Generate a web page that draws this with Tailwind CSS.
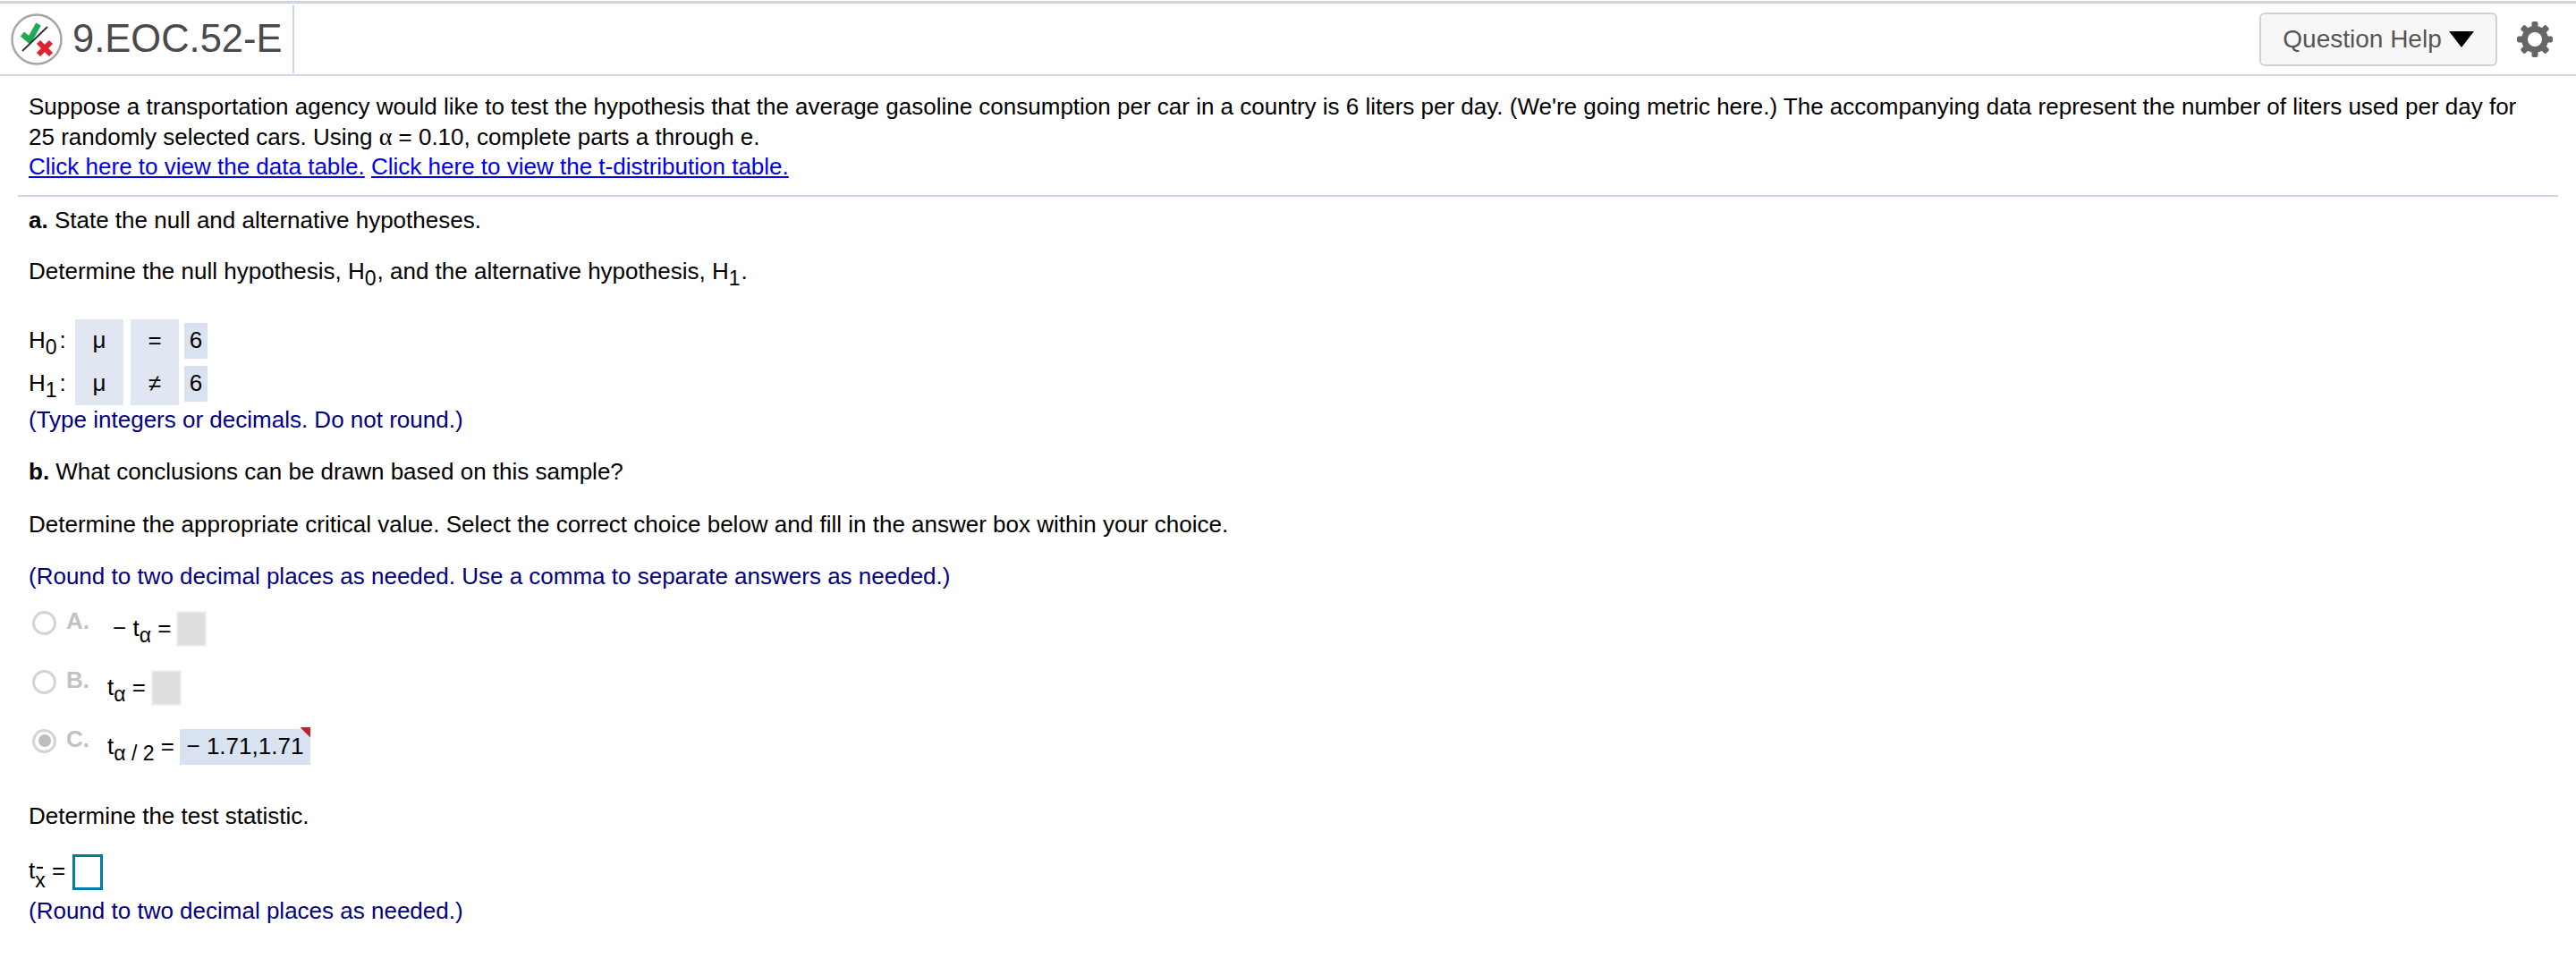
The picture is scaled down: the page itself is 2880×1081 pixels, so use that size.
<!DOCTYPE html>
<html lang="en">
<head>
    <meta charset="UTF-8" />
    <title>9.EOC.52-E</title>
    <script src="https://cdn.jsdelivr.net/npm/@tailwindcss/browser@4"></script>
</head>

<body class="bg-white text-black font-['Liberation_Sans',Arial,sans-serif] text-[26px] leading-[33.5px] overflow-hidden pt-[1px]">

<!-- Header -->
<header class="h-[84px] border-t-[3px] border-b-[2px] border-[#d0d5e5] flex items-center pl-[11px] pr-[25px]">
    <svg class="w-[60px] h-[60px] shrink-0" viewBox="0 0 60 60">
        <circle cx="30" cy="30" r="27.5" fill="#fff" stroke="#a6a6a6" stroke-width="2.500" />
        <path d="M14 24L22 31L32 13" fill="none" stroke="#1fa855" stroke-width="6.500" />
        <path d="M14 43L42 16" stroke="#333" stroke-width="2" />
        <path d="M32 33L46 47M46 33L32 47" stroke="#e0232e" stroke-width="6" />
    </svg>
    <h1 class="ml-[10px] text-[43.5px] leading-none text-[#4a4a4a] font-normal">9.EOC.52-E</h1>
    <div class="ml-[11px] w-[2px] h-[76px] bg-[#d0d5e5]"></div>
    <button class="ml-auto w-[266px] h-[60px] rounded-[6px] border-2 border-[#d2d2d2] bg-[#f7f7f7] text-[#555] text-[28px] flex items-center justify-center gap-[8px]">
        Question Help
        <svg class="w-[28px] h-[18px]" viewBox="0 0 28 18"><path d="M0 0H28L14 18Z" fill="#000" /></svg>
    </button>
    <svg class="ml-[21px] w-[42px] h-[42px]" viewBox="0 0 42 42" fill="#666">
        <circle cx="21" cy="21" r="15" />
        <g>
            <rect x="17.500" y="1" width="7" height="10" rx="2" />
            <rect x="17.500" y="1" width="7" height="10" rx="2" transform="rotate(45 21 21)" />
            <rect x="17.500" y="1" width="7" height="10" rx="2" transform="rotate(90 21 21)" />
            <rect x="17.500" y="1" width="7" height="10" rx="2" transform="rotate(135 21 21)" />
            <rect x="17.500" y="1" width="7" height="10" rx="2" transform="rotate(180 21 21)" />
            <rect x="17.500" y="1" width="7" height="10" rx="2" transform="rotate(225 21 21)" />
            <rect x="17.500" y="1" width="7" height="10" rx="2" transform="rotate(270 21 21)" />
            <rect x="17.500" y="1" width="7" height="10" rx="2" transform="rotate(315 21 21)" />
        </g>
        <circle cx="21" cy="21" r="8" fill="#fff" />
    </svg>
</header>

<main class="pl-[32px] pr-[20px]">

    <!-- Intro -->
    <section class="pt-[18px] pb-[14px] -ml-[12px] pl-[12px] border-b-2 border-[#d0d0e8]">
        <p>Suppose a transportation agency would like to test the hypothesis that the average gasoline consumption per car in a country is 6 liters per day. (We're going metric here.) The accompanying data represent the number of liters used per day for<br>
        25 randomly selected cars. Using <span class="font-['Liberation_Serif',serif] text-[28px] leading-none">α</span> = 0.10, complete parts a through e.</p>
        <p class="text-[#0000ee]"><a class="underline">Click here to view the data table.</a> <a class="underline">Click here to view the t-distribution table.</a></p>
    </section>

    <!-- Part a -->
    <p class="mt-[10px]"><b>a.</b> State the null and alternative hypotheses.</p>
    <p class="mt-[24px]">Determine the null hypothesis, H<sub class="text-[23px] bottom-[-7px] mr-[1px]">0</sub>, and the alternative hypothesis, H<sub class="text-[23px] bottom-[-7px] mr-[1px]">1</sub>.</p>

    <div class="mt-[36px] grid grid-cols-[52px_54px_8px_54px_6px_26px] grid-rows-[48px_48px] w-fit">
        <div class="flex items-center">H<sub class="text-[23px] bottom-[-7px] mr-[3px]">0</sub>:</div>
        <div class="row-span-2 bg-[#e1e7f2] grid grid-rows-2 place-items-center"><span>μ</span><span>μ</span></div>
        <div class="row-span-2"></div>
        <div class="row-span-2 bg-[#e1e7f2] grid grid-rows-2 place-items-center"><span>=</span><span>≠</span></div>
        <div class="row-span-2"></div>
        <div class="h-[40px] self-center bg-[#d9e2f0] flex items-center justify-center">6</div>
        <div class="flex items-center">H<sub class="text-[23px] bottom-[-7px] mr-[3px]">1</sub>:</div>
        <div class="h-[40px] self-center bg-[#d9e2f0] flex items-center justify-center">6</div>
    </div>
    <p class="text-[#000080]">(Type integers or decimals. Do not round.)</p>

    <!-- Part b -->
    <p class="mt-[25px]"><b>b.</b> What conclusions can be drawn based on this sample?</p>
    <p class="mt-[25px]">Determine the appropriate critical value. Select the correct choice below and fill in the answer box within your choice.</p>
    <p class="mt-[25px] text-[#000080]">(Round to two decimal places as needed. Use a comma to separate answers as needed.)</p>

    <!-- Choices -->
    <div class="mt-[21px] ml-[4px] flex flex-col gap-[26px]">
        <div class="flex items-start h-[40px]">
            <span class="w-[27px] h-[27px] rounded-full border-[3px] border-[#d4d4d4]"></span>
            <b class="ml-[11px] w-[52px] text-[#c2c2c2] -mt-[5px]">A.</b>
            <span class="mt-[3px]">− t<sub class="text-[23px] bottom-[-7px]">α</sub> =</span>
            <span class="ml-[6px] w-[34px] h-[40px] bg-[#dedede] border-2 border-[#edf0f6]"></span>
        </div>
        <div class="flex items-start h-[40px]">
            <span class="w-[27px] h-[27px] rounded-full border-[3px] border-[#d4d4d4]"></span>
            <b class="ml-[11px] w-[46px] text-[#c2c2c2] -mt-[5px]">B.</b>
            <span class="mt-[3px]">t<sub class="text-[23px] bottom-[-7px]">α</sub> =</span>
            <span class="ml-[6px] w-[34px] h-[40px] bg-[#dedede] border-2 border-[#edf0f6]"></span>
        </div>
        <div class="flex items-start h-[40px]">
            <span class="w-[27px] h-[27px] rounded-full border-[3px] border-[#d4d4d4] flex items-center justify-center"><span class="w-[14px] h-[14px] rounded-full bg-[#bdbdbd]"></span></span>
            <b class="ml-[11px] w-[46px] text-[#c2c2c2] -mt-[5px]">C.</b>
            <span class="mt-[3px]">t<sub class="text-[23px] bottom-[-7px]">α / 2</sub> =</span>
            <span class="relative ml-[6px] w-[146px] h-[40px] bg-[#d9e2f0] flex items-center justify-center">− 1.71,1.71
                <span class="absolute right-0 -top-[2px] w-[12px] h-[12px] bg-[#c1202a] [clip-path:polygon(0_0,100%_0,100%_100%)]"></span>
            </span>
        </div>
    </div>

    <!-- Test statistic -->
    <p class="mt-[41px]">Determine the test statistic.</p>
    <div class="mt-[26px] flex items-center h-[40px]">
        <span class="mt-[-2px]">t<sub class="text-[23px] bottom-[-10px]">x<span class="absolute left-[2px] -top-[2px] w-[7px] h-[2px] bg-black"></span></sub> =</span>
        <span class="ml-[8px] w-[34px] h-[40px] border-[3px] border-[#007c9e]"></span>
    </div>
    <p class="mt-[7px] text-[#000080]">(Round to two decimal places as needed.)</p>
</main>

</body>
</html>
